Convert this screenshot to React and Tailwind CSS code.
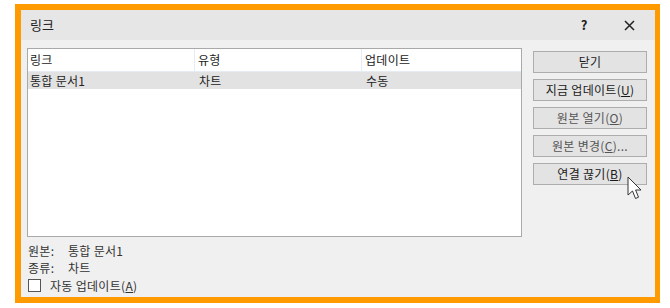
const FONT = { fontFamily: '"Noto Sans CJK KR", "Noto Sans", sans-serif' };

function Btn({ children, dim }) {
  return (
    <button
      className={`h-[22px] w-[114px] border border-[#adadad] bg-[#e3e3e3] text-[12px] tracking-[0.3px] leading-none flex items-center justify-center ${dim ? 'text-[#555]' : 'text-[#1a1a1a]'}`}
    >
      {children}
    </button>
  );
}

function Cursor() {
  return (
    <svg className="absolute left-[627px] top-[172px]" width="16" height="26" viewBox="0 0 16 26">
      <path
        d="M1 1 L1 19 L5.5 15 L8.5 22.5 L11.5 21.2 L8.6 14 L14 14 Z"
        fill="#fff"
        stroke="#333"
        strokeWidth="1"
        strokeLinejoin="round"
      />
    </svg>
  );
}

export default function App() {
  return (
    <div className="relative w-[670px] h-[308px] bg-white" style={FONT}>
      <div className="ml-[15px] mt-[4px] w-[645px] h-[299px] border-[6px] border-r-[5px] border-[#ff9a00] bg-[#f0f0f0] flex flex-col">
        <div className="h-[30px] bg-[#e6e6e6] flex items-center pl-[9px] pr-[20px] text-[13px] text-[#222]">
          <span className="flex-1">링크</span>
          <span className="text-[13px] font-bold w-[14px] text-center mr-[33px]">?</span>
          <svg width="11" height="11" viewBox="0 0 11 11">
            <path d="M1 1 L10 10 M10 1 L1 10" stroke="#222" strokeWidth="1.5" />
          </svg>
        </div>

        <div className="flex pl-[6px] pt-[8px] gap-[11px]">
          <div className="flex flex-col">
            <div className="w-[495px] h-[189px] bg-white border border-[#a9a9a9] text-[12px] tracking-[0.3px] text-[#222] leading-none">
              <div className="flex h-[23px] items-center border-b border-[#e6ecf3]">
                <div className="w-[167px] pl-[2px] border-r border-[#e6ecf3] h-full flex items-center">링크</div>
                <div className="w-[167px] pl-[3px] border-r border-[#e6ecf3] h-full flex items-center">유형</div>
                <div className="flex-1 pl-[3px] h-full flex items-center">업데이트</div>
              </div>
              <div className="flex h-[17px] items-center bg-[#e2e2e2]">
                <div className="w-[167px] pl-[2px]">통합 문서1</div>
                <div className="w-[167px] pl-[4px]">차트</div>
                <div className="flex-1 pl-[4px]">수동</div>
              </div>
            </div>
            <div className="pl-[1px] pt-[5px] text-[12px] tracking-[0.3px] text-[#333] leading-[17px]">
              <div className="flex">
                <span className="w-[40px]">원본:</span>
                <span>통합 문서1</span>
              </div>
              <div className="flex">
                <span className="w-[40px]">종류:</span>
                <span>차트</span>
              </div>
              <div className="flex items-center mt-[1px]">
                <span className="w-[13px] h-[13px] border border-[#555] bg-white mr-[9px]" />
                <span>
                  자동 업데이트(<span className="underline">A</span>)
                </span>
              </div>
            </div>
          </div>

          <div className="flex flex-col gap-[6px] pt-[3px]">
            <Btn>닫기</Btn>
            <Btn>
              지금 업데이트(<span className="underline">U</span>)
            </Btn>
            <Btn dim>
              원본 열기(<span className="underline">O</span>)
            </Btn>
            <Btn dim>
              원본 변경(<span className="underline">C</span>)...
            </Btn>
            <Btn>
              연결 끊기(<span className="underline">B</span>)
            </Btn>
          </div>
        </div>
      </div>
      <Cursor />
    </div>
  );
}
